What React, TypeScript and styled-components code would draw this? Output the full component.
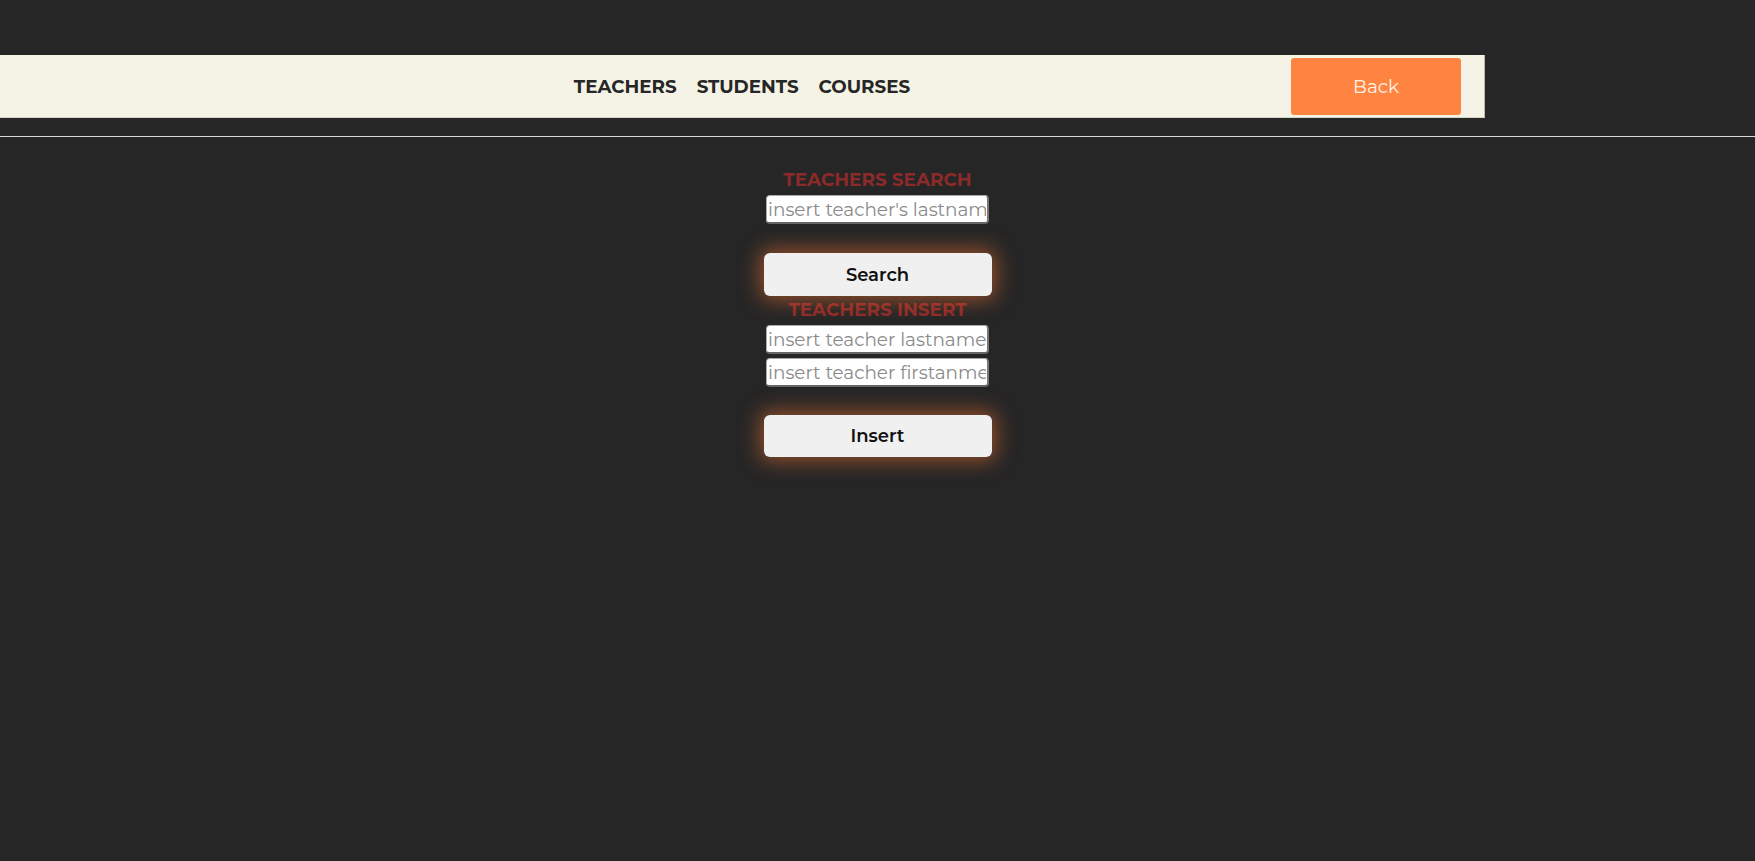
import styled, { createGlobalStyle } from 'styled-components';

const GlobalStyle = createGlobalStyle`
  html, body {
    margin: 0;
    padding: 0;
    background: #262626;
  }

  body {
    font-family: Montserrat, "DejaVu Sans", Verdana, sans-serif;
    min-height: 100vh;
  }
`;

function App() {
  return (
    <>
      <GlobalStyle />
      <Page>
        <Header>
          <NavBar>
            <span />
            <NavLinks>
              <NavLink href="#">TEACHERS</NavLink>
              <NavLink href="#">STUDENTS</NavLink>
              <NavLink href="#">COURSES</NavLink>
            </NavLinks>
            <BackButton type="button">Back</BackButton>
          </NavBar>
        </Header>
        <Divider />
        <Main>
          <Form onSubmit={(e) => e.preventDefault()}>
            <Title>TEACHERS SEARCH</Title>
            <Input type="text" placeholder="insert teacher's lastname" />
            <ActionButton type="submit" $gap={29} $height={43} $after={4}>Search</ActionButton>
          </Form>
          <Form onSubmit={(e) => e.preventDefault()}>
            <Title>TEACHERS INSERT</Title>
            <Input type="text" placeholder="insert teacher lastname" />
            <Input type="text" placeholder="insert teacher firstanme" />
            <ActionButton type="submit" $gap={28} $height={42} $after={5}>Insert</ActionButton>
          </Form>
        </Main>
      </Page>
    </>
  );
}

export default App;

const Page = styled.div`
  display: flex;
  flex-direction: column;
`;

const Header = styled.header`
  padding-top: 55px;
`;

const NavBar = styled.nav`
  display: grid;
  grid-template-columns: 1fr auto 1fr;
  align-items: center;
  box-sizing: border-box;
  width: 1485px;
  height: 63px;
  padding: 3px 23px;
  background: #f5f3e6;
  border-bottom: 1px solid #d6d4c8;
  border-right: 1px solid #b9b8ae;
`;

const NavLinks = styled.div`
  display: flex;
  gap: 20px;
`;

const NavLink = styled.a`
  font-size: 18.3px;
  font-weight: 700;
  color: #262626;
  text-decoration: none;
`;

const BackButton = styled.button`
  justify-self: end;
  width: 170px;
  height: 57px;
  border: none;
  border-radius: 3px;
  background: #ff8442;
  color: #fff3e4;
  font-family: inherit;
  font-size: 18.4px;
  cursor: pointer;
`;

const Divider = styled.hr`
  margin: 18px 0 0;
  border: none;
  border-top: 1px solid #d9d9d9;
`;

const Main = styled.main`
  display: flex;
  flex-direction: column;
  align-items: center;
  padding-top: 33px;
`;

const Form = styled.form`
  display: flex;
  flex-direction: column;
  align-items: center;
  gap: 4px;
`;

const Title = styled.h3`
  margin: 0 0 1px;
  font-size: 18.4px;
  line-height: 20px;
  font-weight: 700;
  color: #8c2a2a;
`;

const Input = styled.input`
  box-sizing: border-box;
  width: 223px;
  height: 29px;
  padding: 1px 1px;
  border: 1px solid #a8a8a8;
  border-bottom: 2px solid #666666;
  border-right: 2px solid #777777;
  border-radius: 4px;
  background: #ffffff;
  font-family: inherit;
  font-size: 18.4px;
  color: #333;
  outline: none;

  &::placeholder {
    color: #8a8a8a;
  }
`;

const ActionButton = styled.button<{ $gap: number; $height: number; $after: number }>`
  position: relative;
  z-index: 1;
  box-sizing: border-box;
  width: 228px;
  height: ${({ $height }) => $height}px;
  margin: ${({ $gap }) => $gap - 4}px 0 ${({ $after }) => $after}px;
  border: none;
  border-radius: 6px;
  background: #f0f0f0;
  color: #111;
  font-family: inherit;
  font-size: 18px;
  font-weight: 600;
  box-shadow: 0 0 20px 4px rgba(255, 120, 50, 0.5);
  cursor: pointer;
`;
